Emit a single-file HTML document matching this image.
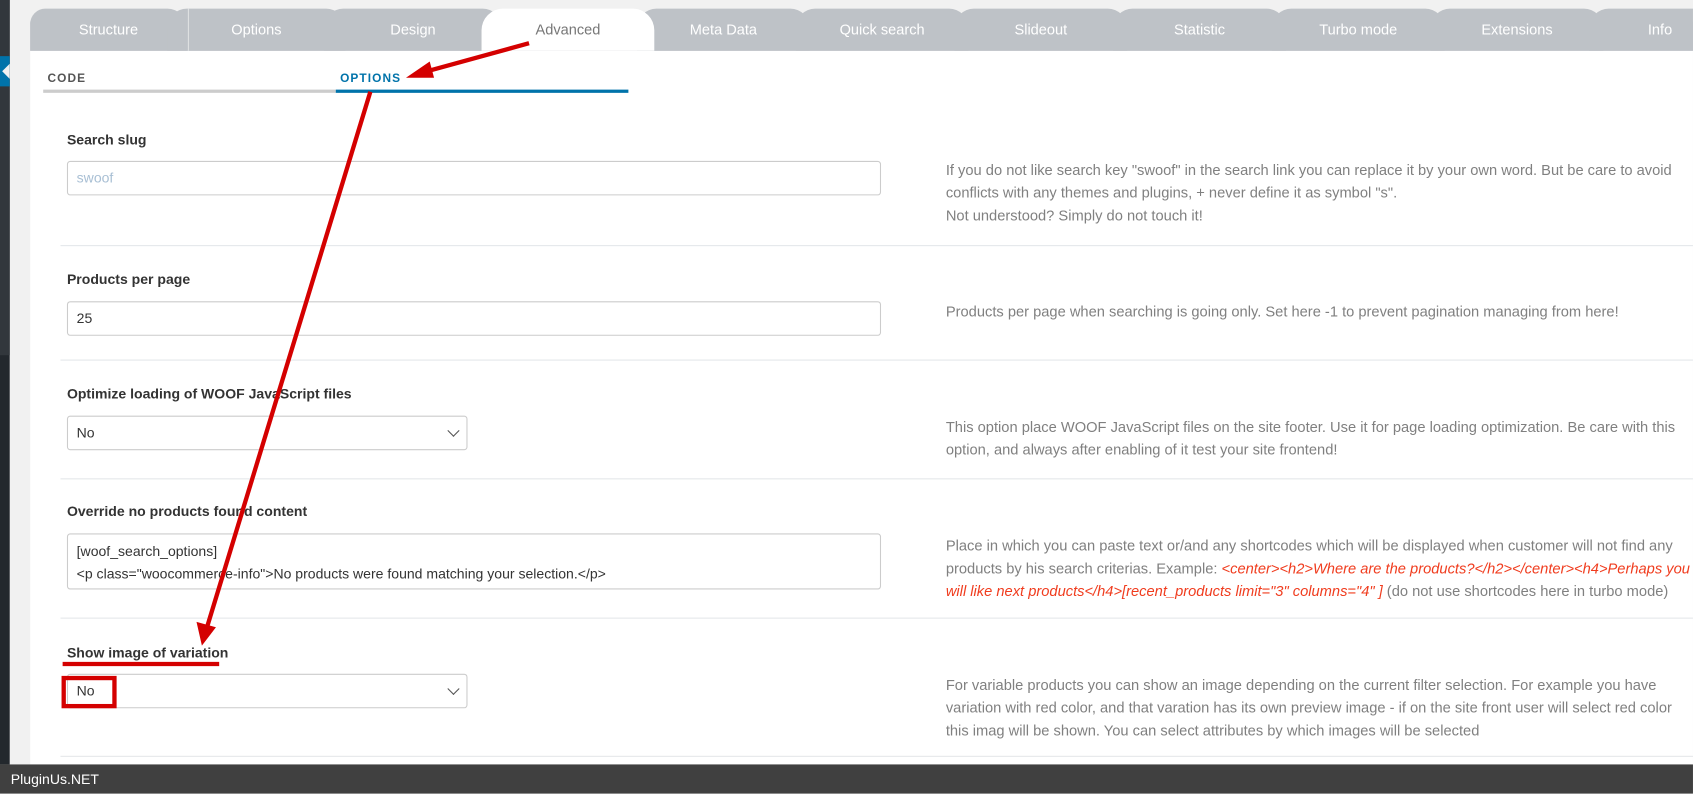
<!DOCTYPE html>
<html><head><meta charset="utf-8"><style>
*{margin:0;padding:0;box-sizing:border-box}
html,body{width:1693px;height:793px;overflow:hidden;background:#f1f1f1}
#s{position:absolute;left:0;top:0;width:1568px;height:735px;transform:scale(1.0797);transform-origin:0 0;font-family:"Liberation Sans",sans-serif;background:#f1f1f1}
.a{position:absolute}
.tab{position:absolute;top:8px;height:39px;background:#bec2c7;border-radius:18px 18px 0 0;color:#fff;font-size:13.5px;text-align:center;line-height:39px}
.lbl{position:absolute;left:62px;font-size:13px;font-weight:bold;color:#333}
.inp{position:absolute;left:62px;border:1px solid #ccc;border-radius:3px;background:#fff;font-size:13px;color:#333;padding-left:8px}
.desc{position:absolute;left:876px;font-size:13.6px;color:#808080;line-height:21px;white-space:nowrap}
.sep{position:absolute;left:56px;right:0;height:1px;background:#e4e7ea}
.red{color:#f03c1e;font-style:italic}
.chev{position:absolute;right:8px;top:9px;width:8px;height:8px;border-right:1.5px solid #555;border-bottom:1.5px solid #555;transform:rotate(45deg)}
</style></head><body><div id="s">
<div class="a" style="left:0;top:0;width:9px;height:708px;background:#23282d"></div>
<div class="a" style="left:0;top:0;width:9px;height:329px;background:#32373c"></div>
<div class="a" style="left:0;top:52px;width:9px;height:28px;background:#0073aa"></div>
<div class="a" style="left:2px;top:59px;width:0;height:0;border-top:7px solid transparent;border-bottom:7px solid transparent;border-right:7px solid #f1f1f1"></div>
<div class="a" style="left:28px;top:47px;width:1540px;height:661px;background:#fff"></div>
<div class="a" style="left:28px;top:20px;width:1540px;height:27px;background:#bec2c7"></div>
<div class="tab" style="left:28px;width:145px;border-radius:14px 18px 0 0">Structure</div>
<div class="tab" style="left:155px;width:165px">Options</div>
<div class="a" style="left:174px;top:8px;width:1px;height:39px;background:#dfe1e3"></div>
<div class="tab" style="left:300px;width:165px">Design</div>
<div class="tab" style="left:590px;width:160px">Meta Data</div>
<div class="tab" style="left:737px;width:160px">Quick search</div>
<div class="tab" style="left:884px;width:160px">Slideout</div>
<div class="tab" style="left:1031px;width:160px">Statistic</div>
<div class="tab" style="left:1178px;width:160px">Turbo mode</div>
<div class="tab" style="left:1325px;width:160px">Extensions</div>
<div class="tab" style="left:1472px;width:96px;border-radius:18px 0 0 0;padding-left:35px">Info</div>
<div class="tab" style="left:446px;width:160px;background:#fff;color:#777;border-radius:20px 20px 0 0">Advanced</div>
<div class="a" style="left:44px;top:67px;font-size:11px;font-weight:bold;letter-spacing:1px;color:#555">CODE</div>
<div class="a" style="left:315px;top:67px;font-size:11px;font-weight:bold;letter-spacing:1px;color:#0073aa">OPTIONS</div>
<div class="a" style="left:40px;top:83px;width:271px;height:3px;background:#ccc"></div>
<div class="a" style="left:311px;top:83px;width:271px;height:3px;background:#0073aa"></div>

<div class="lbl" style="top:122px">Search slug</div>
<div class="inp" style="top:149px;width:754px;height:32px;line-height:30px;color:#a8bfd4">swoof</div>
<div class="desc" style="top:147px">If you do not like search key "swoof" in the search link you can replace it by your own word. But be care to avoid<br>conflicts with any themes and plugins, + never define it as symbol "s".<br>Not understood? Simply do not touch it!</div>
<div class="sep" style="top:227px"></div>

<div class="lbl" style="top:251px">Products per page</div>
<div class="inp" style="top:279px;width:754px;height:32px;line-height:30px">25</div>
<div class="desc" style="top:278px">Products per page when searching is going only. Set here -1 to prevent pagination managing from here!</div>
<div class="sep" style="top:333px"></div>

<div class="lbl" style="top:357px">Optimize loading of WOOF JavaScript files</div>
<div class="inp" style="top:385px;width:371px;height:32px;line-height:30px">No<span class="chev"></span></div>
<div class="desc" style="top:385px">This option place WOOF JavaScript files on the site footer. Use it for page loading optimization. Be care with this<br>option, and always after enabling of it test your site frontend!</div>
<div class="sep" style="top:443px"></div>

<div class="lbl" style="top:466px">Override no products found content</div>
<div class="inp" style="top:494px;width:754px;height:52px;line-height:21px;padding-top:5px">[woof_search_options]<br>&lt;p class="woocommerce-info"&gt;No products were found matching your selection.&lt;/p&gt;</div>
<div class="desc" style="top:495px">Place in which you can paste text or/and any shortcodes which will be displayed when customer will not find any<br>products by his search criterias. Example: <span class="red">&lt;center&gt;&lt;h2&gt;Where are the products?&lt;/h2&gt;&lt;/center&gt;&lt;h4&gt;Perhaps you</span><br><span class="red">will like next products&lt;/h4&gt;[recent_products limit="3" columns="4" ]</span> (do not use shortcodes here in turbo mode)</div>
<div class="sep" style="top:572px"></div>

<div class="lbl" style="top:597px">Show image of variation</div>
<div class="inp" style="top:624px;width:371px;height:32px;line-height:30px">No<span class="chev"></span></div>
<div class="desc" style="top:624px">For variable products you can show an image depending on the current filter selection. For example you have<br>variation with red color, and that varation has its own preview image - if on the site front user will select red color<br>this imag will be shown. You can select attributes by which images will be selected</div>
<div class="sep" style="top:700px"></div>

<div class="a" style="left:0;top:708px;width:1568px;height:27px;background:#404040;color:#fff;font-size:13px;line-height:27px;padding-left:10px">PluginUs.NET</div>

<svg class="a" style="left:0;top:0" width="1568" height="735">
<g stroke="#d40000" fill="none" stroke-width="4">
<line x1="490" y1="40" x2="392" y2="67"/>
<line x1="343" y1="85" x2="192" y2="580"/>
<line x1="58" y1="615" x2="203" y2="615"/>
<rect x="59" y="628" width="47" height="26"/>
</g>
<g fill="#d40000">
<polygon points="376,72 398,57 402,72"/>
<polygon points="187,598 182,576 200,581"/>
</g>
</svg>
</div></body></html>
